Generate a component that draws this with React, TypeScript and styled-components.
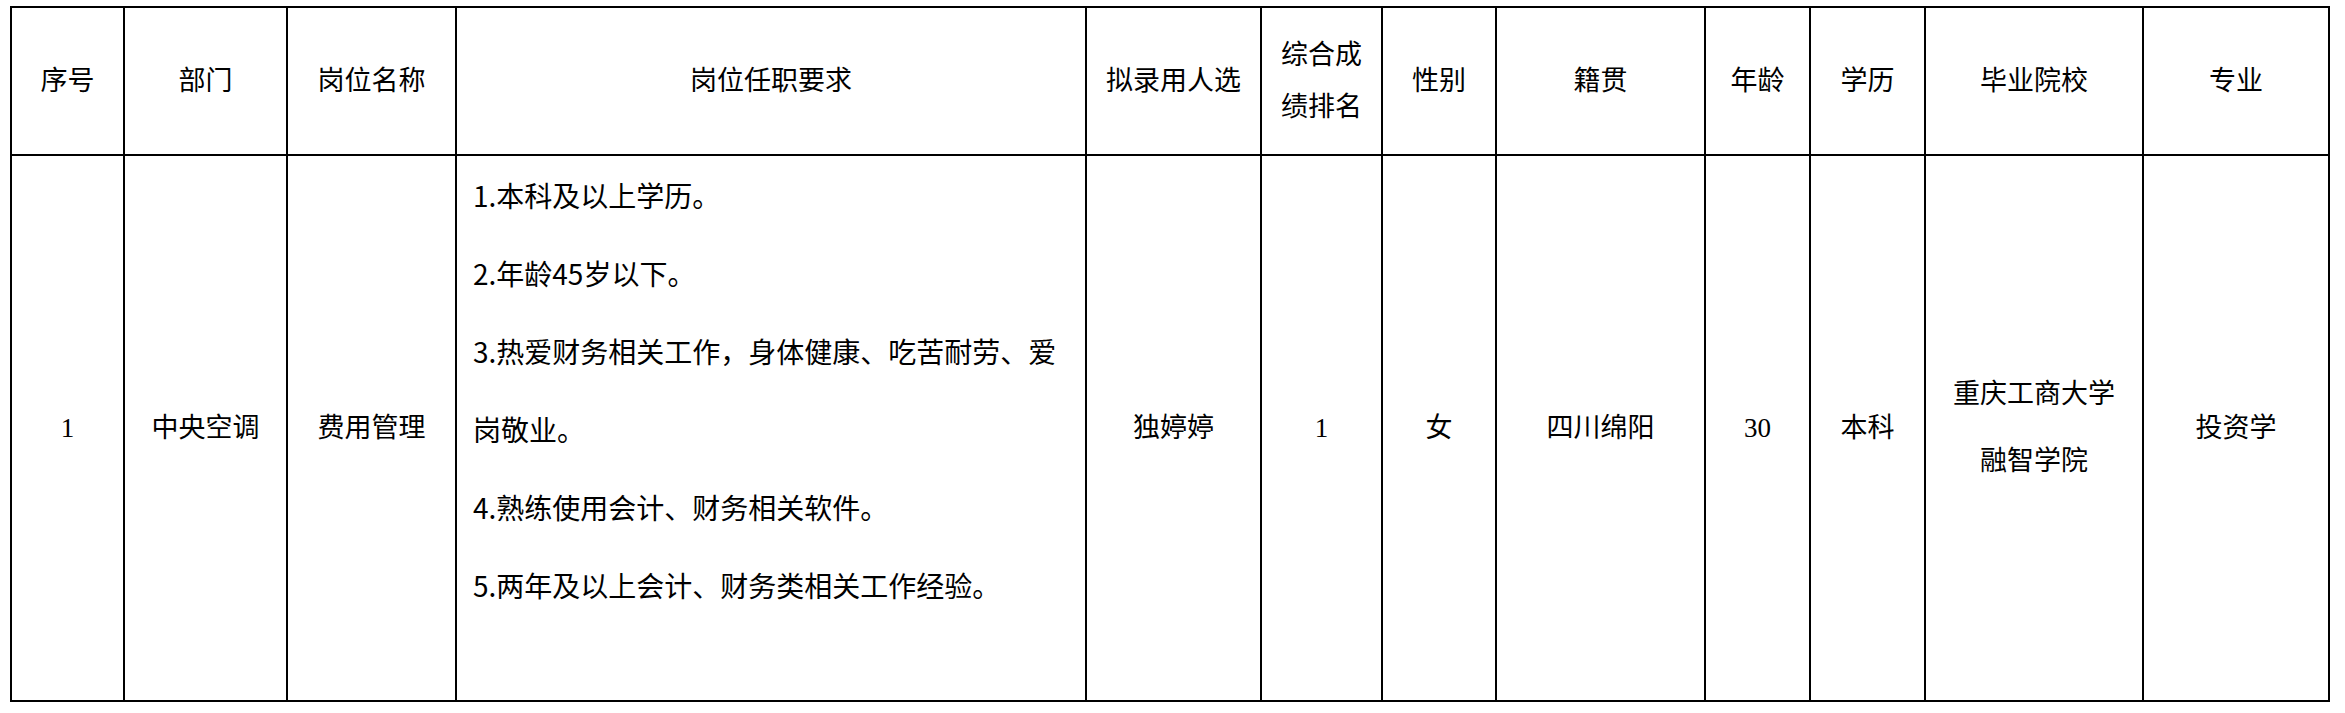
import styled, { createGlobalStyle } from "styled-components";

const GlobalStyle = createGlobalStyle`
  html, body {
    margin: 0;
    padding: 0;
    background: #fff;
  }
`;

const Page = styled.div`
  padding: 6px 0 0 10px;
  background: #fff;
`;

const Sheet = styled.table`
  border-collapse: collapse;
  table-layout: fixed;
  width: 2320px;
  color: #000;
  font-family: "Liberation Serif", "Noto Sans CJK SC", serif;
  font-size: 27px;
`;

const HeadCell = styled.th`
  border: 2px solid #000;
  height: 146px;
  padding: 0 14px;
  font-weight: normal;
  text-align: center;
  vertical-align: middle;
  line-height: 52px;
`;

const Cell = styled.td`
  border: 2px solid #000;
  height: 544px;
  padding: 0 20px;
  text-align: center;
  vertical-align: middle;
  line-height: 67px;
`;

const DutyCell = styled.td`
  border: 2px solid #000;
  padding: 0 16px;
  text-align: left;
  vertical-align: top;
  font-family: "Noto Sans CJK SC", sans-serif;
  font-size: 28px;
  line-height: 78px;
`;

const DutyLine = styled.p`
  margin: 0;
`;

const columns = [
  { title: "序号", width: 113 },
  { title: "部门", width: 163 },
  { title: "岗位名称", width: 169 },
  { title: "岗位任职要求", width: 630 },
  { title: "拟录用人选", width: 175 },
  { title: "综合成绩排名", width: 121 },
  { title: "性别", width: 114 },
  { title: "籍贯", width: 209 },
  { title: "年龄", width: 105 },
  { title: "学历", width: 115 },
  { title: "毕业院校", width: 218 },
  { title: "专业", width: 186 },
];

const duties = [
  "1.本科及以上学历。",
  "2.年龄45岁以下。",
  "3.热爱财务相关工作，身体健康、吃苦耐劳、爱岗敬业。",
  "4.熟练使用会计、财务相关软件。",
  "5.两年及以上会计、财务类相关工作经验。",
];

export default function App() {
  return (
    <>
      <GlobalStyle />
      <Page>
        <Sheet>
          <colgroup>
            {columns.map((c) => (
              <col key={c.title} style={{ width: c.width }} />
            ))}
          </colgroup>
          <thead>
            <tr>
              {columns.map((c) => (
                <HeadCell key={c.title}>{c.title}</HeadCell>
              ))}
            </tr>
          </thead>
          <tbody>
            <tr>
              <Cell>1</Cell>
              <Cell>中央空调</Cell>
              <Cell>费用管理</Cell>
              <DutyCell>
                {duties.map((d) => (
                  <DutyLine key={d}>{d}</DutyLine>
                ))}
              </DutyCell>
              <Cell>独婷婷</Cell>
              <Cell>1</Cell>
              <Cell>女</Cell>
              <Cell>四川绵阳</Cell>
              <Cell>30</Cell>
              <Cell>本科</Cell>
              <Cell>重庆工商大学融智学院</Cell>
              <Cell>投资学</Cell>
            </tr>
          </tbody>
        </Sheet>
      </Page>
    </>
  );
}
